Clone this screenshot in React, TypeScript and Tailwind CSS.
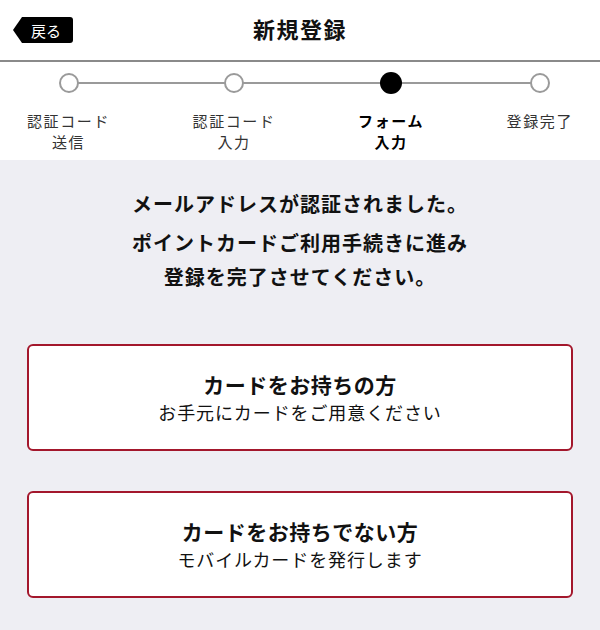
const font = "font-['Noto_Sans_CJK_JP','Noto_Sans',sans-serif]";

const steps = [
  { lines: ["認証コード", "送信"], active: false },
  { lines: ["認証コード", "入力"], active: false },
  { lines: ["フォーム", "入力"], active: true },
  { lines: ["登録完了"], active: false },
];

const options = [
  { title: "カードをお持ちの方", sub: "お手元にカードをご用意ください" },
  { title: "カードをお持ちでない方", sub: "モバイルカードを発行します" },
];

export default function App() {
  return (
    <div className={`${font} w-[600px] h-[630px] bg-[#eeeef3] text-[#111]`}>
      {/* Header */}
      <header className="h-[62px] bg-white border-b-2 border-[#8a8a8a] grid grid-cols-[1fr_auto_1fr] items-center">
        <div className="pl-[13px]">
          <button className="w-[60px] h-[26px] bg-black text-white text-[15px] leading-none pl-[6px] rounded-[3px] [clip-path:polygon(0_50%,15%_0,100%_0,100%_100%,15%_100%)] flex items-center justify-center">
            戻る
          </button>
        </div>
        <h1 className="text-[22px] font-bold tracking-[1.5px] pb-[4px]">新規登録</h1>
        <div />
      </header>

      {/* Steps */}
      <section className="bg-white h-[98px] pt-[11px]">
        <div className="relative flex justify-between px-[27px]">
          <div className="absolute top-[9px] left-[67px] right-[60px] h-[2px] bg-[#9a9a9a]" />
          {steps.map((s, i) => (
            <div key={i} className="relative flex flex-col items-center">
              {s.active ? (
                <div className="w-[22px] h-[22px] -my-[1px] rounded-full bg-black" />
              ) : (
                <div className="w-[20px] h-[20px] rounded-full bg-white border-2 border-[#9a9a9a]" />
              )}
              <div
                className={`mt-[17px] text-[15px] leading-[21px] tracking-[1.6px] text-center ${
                  s.active ? "font-bold text-black" : "text-[#333]"
                }`}
              >
                {s.lines.map((l) => (
                  <div key={l}>{l}</div>
                ))}
              </div>
            </div>
          ))}
        </div>
      </section>

      {/* Message */}
      <div className="pt-[27px] text-center font-bold text-[20px] tracking-[1px]">
        <p className="leading-[34px] mb-[5px]">メールアドレスが認証されました。</p>
        <p className="leading-[34px]">
          ポイントカードご利用手続きに進み
          <br />
          登録を完了させてください。
        </p>
      </div>

      {/* Options */}
      <div className="mt-[50px] mx-[27px] flex flex-col gap-[40px]">
        {options.map((o) => (
          <button
            key={o.title}
            className="h-[107px] bg-white border-2 border-[#a3172c] rounded-[6px] flex flex-col items-center justify-center"
          >
            <span className="text-[21px] font-bold leading-[28px] tracking-[0.5px]">{o.title}</span>
            <span className="text-[18px] leading-[28px] tracking-[0.9px]">{o.sub}</span>
          </button>
        ))}
      </div>
    </div>
  );
}
